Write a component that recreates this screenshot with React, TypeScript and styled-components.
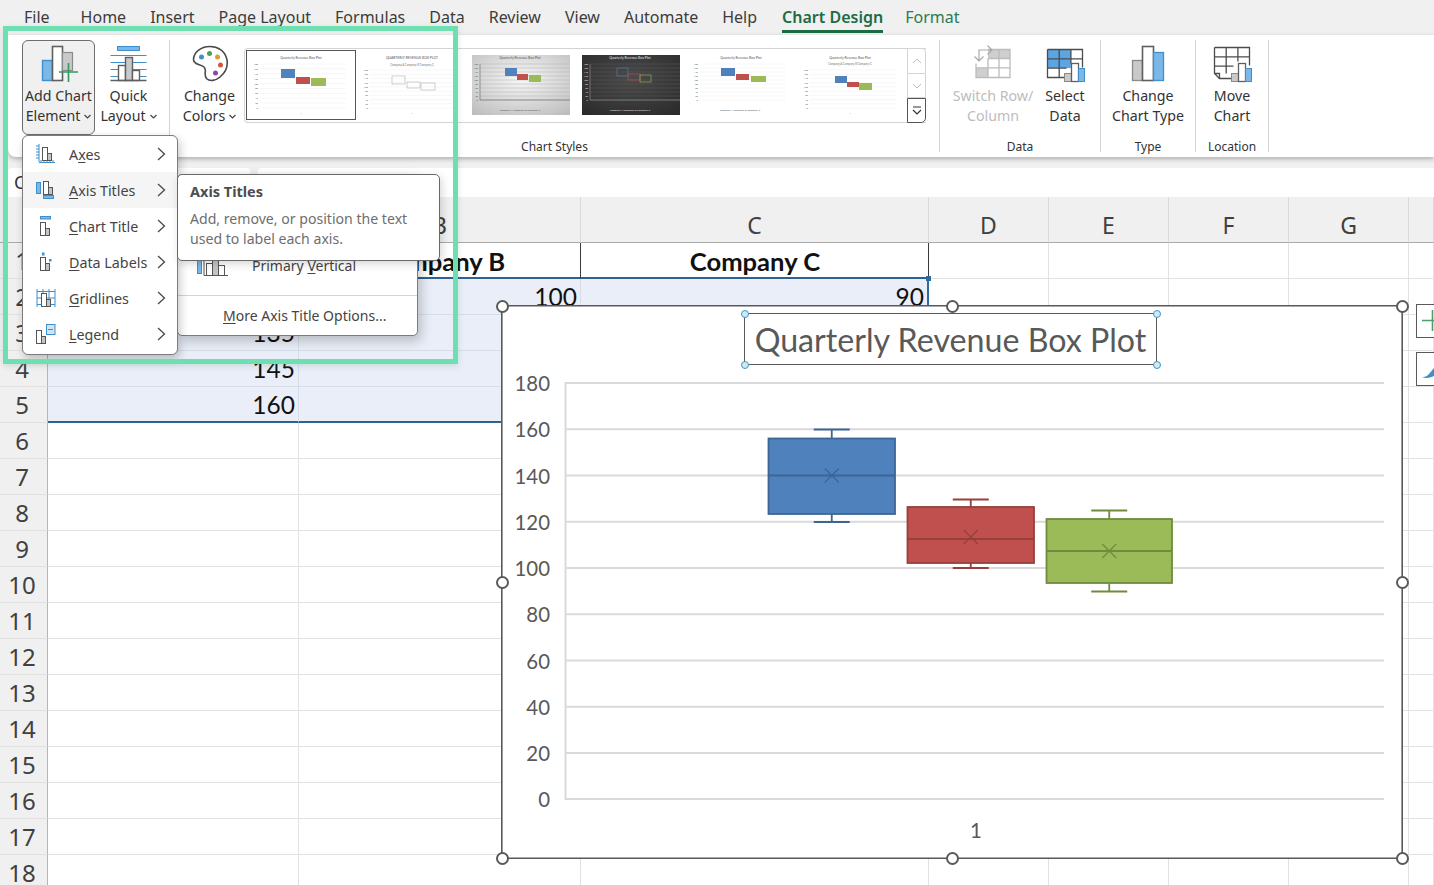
import React from 'react';
import styled, { createGlobalStyle } from 'styled-components';

const Global = createGlobalStyle`
  html, body { margin: 0; padding: 0; background: #f0f0f0; overflow: hidden; }
  * { box-sizing: border-box; }
  u { text-underline-offset: 2px; text-decoration-thickness: 1px; }
`;

const UI = `"Noto Sans", "Open Sans", Arial, sans-serif`;
const CELL = `Lato, "Open Sans", Arial, sans-serif`;

const Root = styled.div`
  position: relative; width: 1434px; height: 885px; overflow: hidden;
  background: #f0f0f0; font-family: ${UI}; color: #333; display: flex; flex-direction: column;
`;

/* ---------- tabs ---------- */
const TabBar = styled.nav`
  height: 35px; flex: none; display: flex; align-items: flex-start; gap: 24px; padding-left: 24px;
`;
const Tab = styled.div<{ $active?: boolean; $context?: boolean; $wide?: boolean }>`
  height: 33px; line-height: 34px; font-size: 16px; white-space: nowrap;
  color: ${p => (p.$active ? '#1c6b45' : p.$context ? '#2b7a52' : '#3c3c3c')};
  font-weight: ${p => (p.$active ? 600 : 400)};
  border-bottom: 3px solid ${p => (p.$active ? '#1c6b45' : 'transparent')};
  margin-right: ${p => (p.$wide ? '7px' : 0)};
  margin-left: ${p => (p.$active ? '1px' : p.$context ? '-2px' : 0)};
`;

/* ---------- ribbon ---------- */
const Ribbon = styled.section`
  height: 122px; flex: none; margin-left: 8px; padding: 5px 0 0 14px; display: flex;
  background: #fff; border-bottom-left-radius: 8px;
  box-shadow: 0 2px 5px rgba(0,0,0,.28);
  position: relative; z-index: 1;
`;
const Group = styled.div<{ $w: number }>`
  width: ${p => p.$w}px; height: 112px; flex: none; display: flex; flex-direction: column;
  border-right: 1px solid #d4d4d4;
`;
const GroupBody = styled.div<{ $pad?: number; $gap?: number }>`
  display: flex; align-items: flex-start; padding-left: ${p => p.$pad ?? 0}px; gap: ${p => p.$gap ?? 0}px;
`;
const GroupLabel = styled.div`
  margin-top: auto; height: 14px; line-height: 18px; text-align: center; font-size: 12px; color: #333; white-space: nowrap;
`;
const RibbonButton = styled.div<{ $w: number; $on?: boolean; $off?: boolean }>`
  width: ${p => p.$w}px; height: 95px; flex: none; display: flex; flex-direction: column; align-items: center;
  padding-top: 3px; border-radius: 6px; font-size: 14.2px; line-height: 20px; text-align: center; white-space: nowrap;
  color: ${p => (p.$off ? '#bdbdbd' : '#333')};
  background: ${p => (p.$on ? '#f0f0f0' : 'transparent')};
  border: 1px solid ${p => (p.$on ? '#6e6e6e' : 'transparent')};
  svg.main { display: block; margin-bottom: 2px; flex: none; }
`;
const Caret = styled.svg`
  width: 7px; height: 5px; margin-left: 4px; vertical-align: 2px; fill: none; stroke: #444; stroke-width: 1.2;
`;

/* ---------- gallery ---------- */
const Gallery = styled.div`
  margin-left: 3px; margin-top: 8px; width: 682px; height: 75px; flex: none; display: flex;
  border: 1px solid #d4d4d4; border-right: 0; border-radius: 4px 0 0 4px; padding: 1px 0 0 1px;
  background: #fff;
`;
const Slot = styled.div<{ $sel?: boolean }>`
  width: 110px; height: 70px; flex: none;
  outline: ${p => (p.$sel ? '1px solid #555' : 'none')}; outline-offset: -1px;
  svg { display: block; }
`;
const GalleryScroll = styled.div`
  margin-left: auto; width: 19px; display: flex; flex-direction: column; margin-top: -2px; margin-bottom: -1px;
`;
const ScrollBtn = styled.div<{ $more?: boolean; $h: number }>`
  height: ${p => p.$h}px; display: flex; align-items: center; justify-content: center;
  border: 1px solid ${p => (p.$more ? '#555' : '#d4d4d4')};
  border-top-width: ${p => (p.$h === 26 ? 1 : 0)}px;
  border-top-color: #d4d4d4;
  border-radius: ${p => (p.$more ? '0 0 5px 0' : p.$h === 26 ? '0 4px 0 0' : 0)};
  background: #fff;
  ${p => p.$more && 'border-top-width: 1px; border-top-color: #555;'}
`;

/* ---------- formula bar ---------- */
const FormulaRow = styled.div`
  height: 29px; flex: none; margin-top: 11px; padding-left: 8px; display: flex; gap: 8px;
`;
const NameBox = styled.div`
  width: 242px; background: #fff; border-radius: 4px 4px 0 0; font-size: 18px; line-height: 29px; padding-left: 6px; color: #333; white-space: nowrap;
`;
const FormulaBox = styled.div`
  flex: 1; background: #fff; border-radius: 4px 0 0 0;
`;

/* ---------- sheet ---------- */
const Sheet = styled.div`
  display: grid; grid-template-columns: 48px 251px 282px 348px 120px 120px 120px 120px 25px;
  grid-auto-rows: 36px; grid-template-rows: 46px; background: #fff; font-family: ${CELL};
`;
const ColHead = styled.div`
  background: #f0f0f0; border-bottom: 1px solid #a9a9a9; border-right: 1px solid #dadada;
  display: flex; align-items: center; justify-content: center; padding-top: 10px; font-family: ${UI}; font-size: 23px; color: #404040;
`;
const Corner = styled(ColHead)`border-right: 1px solid #b5b5b5;`;
const RowHead = styled.div`
  background: #f0f0f0; border-right: 1px solid #b5b5b5; border-bottom: 1px solid #e2e2e2;
  text-align: center; font-family: ${UI}; font-size: 24px; line-height: 36px; color: #404040; padding-right: 3px;
`;
const Cell = styled.div<{ $sel?: boolean; $bold?: boolean; $dark?: boolean; $edgeR?: boolean; $edgeB?: boolean }>`
  background: ${p => (p.$sel ? '#e9eef8' : '#fff')};
  border-right: ${p => (p.$edgeR ? '2px solid #2f6a9e' : p.$dark ? '1px solid #3a3a3a' : `1px solid ${p.$sel ? '#d7dde6' : '#e2e2e2'}`)};
  border-bottom: ${p => (p.$edgeB ? '2px solid #2f6090' : p.$dark ? '2px solid #2f6090' : `1px solid ${p.$sel ? '#d7dde6' : '#e2e2e2'}`)};
  font-size: ${p => (p.$bold ? 25.6 : 24.5)}px; line-height: ${p => (p.$bold ? 36 : 35)}px; padding: 0 3px 0 4px; overflow: hidden; white-space: nowrap; color: #111;
  text-align: ${p => (p.$bold ? 'center' : 'right')};
  font-weight: ${p => (p.$bold ? 700 : 400)};
`;
const FillHandle = styled.div`
  position: absolute; left: 926px; top: 276px; width: 5px; height: 5px; background: #2f6a9e;
`;

/* ---------- floating chart ---------- */
const ChartFrame = styled.div`
  position: absolute; left: 501px; top: 305px; width: 902px; height: 554px; background: #fff;
  border: 1px solid #595959; box-shadow: inset 0 0 0 .6px #595959; z-index: 2;
  svg.plot { position: absolute; left: -1px; top: -1px; }
`;
const Handle = styled.div<{ $x: number; $y: number }>`
  position: absolute; left: ${p => p.$x}%; top: ${p => p.$y}%; width: 13px; height: 13px;
  margin: -6.5px 0 0 -6.5px; border-radius: 50%; background: #fff; border: 2px solid #595959;
`;
const TitleBox = styled.div`
  position: absolute; left: 242px; top: 7px; width: 413px; height: 52px; border: 1px solid #595959;
  font-family: ${CELL}; font-size: 32.2px; line-height: 52px; text-align: center; color: #595959; white-space: nowrap;
`;
const TinyHandle = styled.div<{ $r?: boolean; $b?: boolean }>`
  position: absolute; width: 8px; height: 8px; border-radius: 50%; background: #cfe8f5; border: 1.5px solid #3d9ac9;
  ${p => (p.$r ? 'right: -4.5px;' : 'left: -4.5px;')}
  ${p => (p.$b ? 'bottom: -4.5px;' : 'top: -4.5px;')}
`;
const SideButton = styled.div<{ $top: number }>`
  position: absolute; left: 1416px; top: ${p => p.$top}px; width: 40px; height: 34px; background: #fff;
  border: 1px solid #595959; z-index: 2; padding: 5px 0 0 5px;
  svg { display: block; }
`;

/* ---------- menus ---------- */
const Menu = styled.div`
  position: absolute; left: 22px; top: 135px; width: 156px; height: 220px; background: #fff; z-index: 6;
  border: 1px solid #7c7c7c; border-radius: 6px; box-shadow: 2px 4px 10px rgba(0,0,0,.22); overflow: hidden;
`;
const MenuRow = styled.div<{ $hover?: boolean }>`
  height: 36px; display: flex; align-items: center; padding: 0 11px 0 13px; font-size: 14.3px; color: #444; white-space: nowrap;
  background: ${p => (p.$hover ? '#f5f5f5' : 'transparent')};
  svg.ico { flex: none; margin-right: 13px; }
  svg.chev { flex: none; margin-left: auto; }
`;
const SubMenu = styled.div`
  position: absolute; left: 177px; top: 174px; width: 241px; height: 162px; background: #fff; z-index: 5;
  border: 1px solid #7c7c7c; border-radius: 5px; box-shadow: 3px 5px 12px rgba(0,0,0,.22);
  padding-top: 71px; font-size: 14px; color: #444;
`;
const SubRow = styled.div`
  height: 38px; display: flex; align-items: center; padding-left: 19px; white-space: nowrap;
  svg { margin-right: 23px; flex: none; }
`;
const SubDivider = styled.div`
  margin: 11px 0 1px; height: 1px; background: #d4d4d4;
`;
const SubLink = styled.div`
  height: 38px; line-height: 38px; padding-left: 45px; white-space: nowrap;
`;
const Tip = styled.div`
  position: absolute; left: 177px; top: 174px; width: 263px; height: 87px; background: #fff; z-index: 7;
  border: 1px solid #686868; border-radius: 5px; padding: 6px 12px; box-shadow: 2px 3px 8px rgba(0,0,0,.16);
`;
const TipTitle = styled.div`
  font-size: 14.5px; font-weight: 700; color: #4d4d4d; line-height: 21px; margin-bottom: 7px;
`;
const TipText = styled.div`
  font-size: 14.1px; line-height: 20px; color: #6e6e6e; white-space: nowrap;
`;
const Callout = styled.div`
  position: absolute; left: 3px; top: 26px; width: 455px; height: 338px; z-index: 8; pointer-events: none;
  border: 5px solid #6edfb1; box-shadow: 0 2px 6px rgba(60,120,90,.18);
`;

/* ---------- drawings ---------- */
const D = '#5f5f5f', B = '#3f8fcb', BF = '#7ab8ea', G = '#c9c9c9';

const Main = (p: React.SVGProps<SVGSVGElement>) => <svg className="main" width={40} height={40} viewBox="0 0 40 40" fill="none" {...p} />;

const AddChartIcon = () => (
  <Main>
    <rect x="3.5" y="16.5" width="10" height="20" fill={BF} stroke={B} strokeWidth="1.4" />
    <rect x="13.5" y="2.5" width="10" height="34" fill="#fff" stroke={D} strokeWidth="1.6" />
    <rect x="23.5" y="8.5" width="10" height="18" fill={G} stroke="#8a8a8a" strokeWidth="1.2" />
    <path d="M29.5 19v19M20 28h19" stroke="#2f9a5f" strokeWidth="1.6" />
  </Main>
);
const QuickLayoutIcon = () => (
  <Main>
    <rect x="8.5" y="2.5" width="22" height="4" fill={BF} stroke={B} />
    <path d="M1.5 11.5h36M1.5 18.5h36M1.5 25.5h36M1.5 32.5h36" stroke={B} strokeWidth="1.2" />
    <rect x="9.5" y="21.5" width="7" height="15" fill="#fff" stroke={D} strokeWidth="1.4" />
    <rect x="16.5" y="13.5" width="7" height="23" fill={G} stroke={D} strokeWidth="1.4" />
    <rect x="23.5" y="26.5" width="7" height="10" fill="#fff" stroke={D} strokeWidth="1.4" />
    <path d="M1.5 36.5h36" stroke={D} strokeWidth="1.4" />
  </Main>
);
const PaletteIcon = () => (
  <Main>
    <path d="M20 2.500C10 2.500 3.500 9 3.500 15.500c0 5.500 7 4.500 10.500 7.500 3.500 3.500-1 7 2.500 11.500 3 3 9 2.500 13.500-1.500 6-5 8.500-12 6.500-19C34.500 7 28 2.500 20 2.500z" fill="#fff" stroke="#4a4a4a" strokeWidth="1.6" />
    <circle cx="11.500" cy="13" r="2.500" fill="#3f8fcb" />
    <circle cx="19.500" cy="9.500" r="2.500" fill="#4e9e5b" />
    <circle cx="27.500" cy="13" r="2.500" fill="#e39a36" />
    <circle cx="30.500" cy="21" r="2.500" fill="#d4553f" />
    <circle cx="25.500" cy="29" r="2.500" fill="#8b4aa8" />
  </Main>
);
const ChartTypeIcon = () => (
  <Main>
    <rect x="4.500" y="16.500" width="10" height="20" fill={G} stroke="#8a8a8a" strokeWidth="1.3" />
    <rect x="14.500" y="2.500" width="11" height="34" fill="#fff" stroke={D} strokeWidth="1.6" />
    <rect x="25.500" y="8.500" width="10" height="28" fill={BF} stroke={B} strokeWidth="1.3" />
  </Main>
);
const MiniBars = ({ x }: { x: number }) => (
  <g>
    <rect x={x} y="29.500" width="7" height="8" fill={G} stroke="#8a8a8a" />
    <rect x={x + 7} y="19.500" width="7" height="18" fill="#fff" stroke={D} strokeWidth="1.3" />
    <rect x={x + 14} y="24.500" width="6" height="13" fill={BF} stroke={B} />
  </g>
);
const SelectDataIcon = () => (
  <Main>
    <rect x="2.500" y="5.500" width="23.400" height="18.600" fill="#5aa5e4" />
    <path d="M2.500 5.500h35v18M2.500 5.500v28h17M14.200 5.500v28M25.900 5.500v14M2.500 14.800h35M2.500 24.100h19" stroke="#4c4c4c" strokeWidth="1.300" />
    <MiniBars x={19.500} />
  </Main>
);
const SwitchIcon = () => (
  <Main>
    <rect x="3" y="24" width="12" height="9" fill="#cfcfcf" />
    <rect x="15" y="5" width="22" height="9" fill="#cfcfcf" />
    <path d="M15 5.500h22v28H3v-14M15 14.500h22M3 23.800h34M15 14.500v19M26 5.500v28" stroke="#bcbcbc" strokeWidth="1.300" />
    <path d="M6 17V6h13M14.500 1.500 19 6l-4.500 4.500M1.500 12.500 6 17l4.500-4.500" stroke="#a9a9a9" strokeWidth="1.200" />
  </Main>
);
const MoveChartIcon = () => (
  <Main>
    <path d="M2.500 3.500h35v18M2.500 3.500v26l5 5h12M2.500 29.500h5v5M14.200 3.500v26M25.900 3.500v14M2.500 12.800h35M2.500 22.100h19" stroke="#4c4c4c" strokeWidth="1.300" />
    <MiniBars x={19.500} />
  </Main>
);
const DownCaret = () => <Caret viewBox="0 0 7 5"><path d="M.5 1l3 3 3-3" /></Caret>;
const Chevron = () => (
  <svg className="chev" width="9" height="14" viewBox="0 0 9 14" fill="none"><path d="M1 1l6.500 6L1 13" stroke="#4a4a4a" strokeWidth="1.300" /></svg>
);
const Ico = (p: React.SVGProps<SVGSVGElement>) => <svg className="ico" width={20} height={20} viewBox="0 0 20 20" fill="none" {...p} />;
const SmallBars = ({ x = 6, y = 3 }: { x?: number; y?: number }) => (
  <g stroke="#555" strokeWidth="1" fill="#fff">
    <rect x={x + .5} y={y + .5} width="5" height="13" />
    <rect x={x + 5.500} y={y + 6.500} width="4" height="7" fill="#c4c4c4" />
  </g>
);
const AxesIco = () => (
  <Ico>
    <path d="M3 0v18M0 2h3M0 5h3M0 8h3M0 11h3M0 14h3M3 18.500h16M5 16v3M8 16v3M11 16v3M14 16v3M17 16v3" stroke={B} strokeWidth="1" />
    <SmallBars />
  </Ico>
);
const TitlesIco = () => (
  <Ico>
    <rect x=".5" y="2.500" width="4" height="11" fill={BF} stroke={B} />
    <rect x="7.500" y="15.500" width="10" height="3" fill={BF} stroke={B} />
    <SmallBars x={7} y={1} />
  </Ico>
);
const ChartTitleIco = () => (
  <Ico>
    <rect x="4.500" y="0.500" width="10" height="2.500" fill={BF} stroke={B} />
    <SmallBars x={4} y={6} />
  </Ico>
);
const LabelsIco = () => (
  <Ico>
    <rect x="6" y="0.500" width="2.500" height="3" fill={B} />
    <rect x="13" y="7" width="2.500" height="2.500" fill={B} />
    <SmallBars x={4} y={5} />
  </Ico>
);
const GridIco = () => (
  <Ico>
    <path d="M1 3.500h18M1 10h18M1 16.500h18M1 1v18M7 1v18M13 1v18M19 1v18" stroke={B} strokeWidth="1" />
    <SmallBars x={5} y={5} />
  </Ico>
);
const LegendIco = () => (
  <Ico>
    <rect x="10.500" y="0.500" width="8.500" height="10" fill="#cfe4f6" stroke={B} />
    <path d="M12 5.500h5" stroke={B} />
    <SmallBars x={0} y={6} />
  </Ico>
);
const VerticalIco = () => (
  <svg width="32" height="24" viewBox="0 0 32 24" fill="none">
    <rect x=".5" y="1.500" width="4" height="19" fill={BF} stroke={B} />
    <path d="M7 0v22.500h24" stroke="#555" />
    <rect x="9.500" y="10.500" width="6" height="12" fill="#fff" stroke="#555" />
    <rect x="15.500" y="5.500" width="6" height="17" fill="#c4c4c4" stroke="#555" />
    <rect x="21.500" y="12.500" width="6" height="10" fill="#fff" stroke="#555" />
  </svg>
);

type Box = [number, number, number, number];
interface ThumbSpec {
  sel?: boolean; title: string; tx: number; ty: number; sub?: number; legend?: boolean; outline?: boolean;
  bg?: 'gray' | 'dark'; boxes: Box[]; faint?: boolean;
}
const THUMBS: ThumbSpec[] = [
  { sel: true, title: 'Quarterly Revenue Box Plot', tx: 55, ty: 9, boxes: [[35, 19, 14, 9], [50, 27, 14, 7], [65, 28, 15, 8]] },
  { title: 'QUARTERLY REVENUE BOX PLOT', tx: 56, ty: 9, sub: 16, outline: true, faint: true, boxes: [[36, 26, 13, 8], [51, 32, 13, 6], [65, 33, 14, 7]] },
  { title: 'Quarterly Revenue Box Plot', tx: 54, ty: 9, legend: true, bg: 'gray', boxes: [[39, 18, 12, 8], [51, 24, 11, 6], [63, 25, 12, 7]] },
  { title: 'Quarterly Revenue Box Plot', tx: 54, ty: 9, legend: true, bg: 'dark', outline: true, boxes: [[41, 18, 11, 8], [52, 24, 12, 6], [64, 25, 11, 7]] },
  { title: 'Quarterly Revenue Box Plot', tx: 55, ty: 9, legend: true, boxes: [[35, 18, 14, 8], [50, 24, 13, 6], [65, 26, 15, 6]] },
  { title: 'Quarterly Revenue Box Plot', tx: 54, ty: 9, sub: 15, boxes: [[39, 26, 12, 7], [51, 32, 12, 5], [63, 33, 13, 7]] },
];
const BOXCOL = ['#4f81bd', '#c0504d', '#9bbb59'];

const Thumb = ({ s, idx }: { s: ThumbSpec; idx: number }) => {
  const dark = s.bg === 'dark';
  const ink = dark ? '#e8e8e8' : '#555';
  const inset = s.bg || s.legend ? { x: 6, y: 5, w: 98, h: 60 } : { x: 1, y: 1, w: 108, h: 68 };
  return (
    <svg width="110" height="70" viewBox="0 0 110 70" fontFamily={CELL}>
      <defs>
        <radialGradient id={`g${idx}`} cx="50%" cy="40%" r="75%">
          <stop offset="0" stopColor={dark ? '#4a4a4a' : '#f8f8f8'} />
          <stop offset="1" stopColor={dark ? '#2b2b2b' : '#bdbdbd'} />
        </radialGradient>
      </defs>
      {s.bg && <rect x={inset.x} y={inset.y} width={inset.w} height={inset.h} fill={`url(#g${idx})`} />}
      <text x={s.tx} y={s.ty} fontSize="3.400" fill={ink} textAnchor="middle">{s.title}</text>
      {s.sub && <text x={s.tx} y={s.sub} fontSize="2.800" fill="#777" textAnchor="middle">Company A  Company B  Company C</text>}
      {Array.from({ length: 10 }, (_, i) => {
        const top = s.sub ? 20 : 14;
        const bottom = s.legend ? 50 : 58;
        const y = top + ((bottom - top) * i) / 9;
        return (
          <g key={i}>
            <text x={12} y={y + 1} fontSize="2.400" fill={ink} textAnchor="end">{180 - i * 20}</text>
            <line x1={14} x2={s.bg ? 104 : 100} y1={y} y2={y} stroke={dark ? '#5a5a5a' : s.bg ? '#b0b0b0' : '#ededed'} strokeWidth=".5" />
          </g>
        );
      })}
      {s.bg && <path d="M14 14V50H104" stroke={dark ? '#999' : '#666'} strokeWidth=".6" fill="none" />}
      {s.boxes.map((b, i) => (
        <rect key={i} x={b[0]} y={b[1]} width={b[2]} height={b[3]} fill={s.outline ? 'none' : BOXCOL[i]}
          stroke={s.outline ? (s.faint ? '#b5b0a8' : BOXCOL[i]) : 'none'} strokeWidth=".6" />
      ))}
      {s.legend && <text x="54" y="60.500" fontSize="2.600" fill={ink} textAnchor="middle">Company A Company B Company C</text>}
      {!s.legend && <text x={s.tx} y="64" fontSize="2.600" fill="#666" textAnchor="middle">1</text>}
    </svg>
  );
};

const AXIS: [string, number][] = [['180', 383], ['160', 429.300], ['140', 475.500], ['120', 521.800], ['100', 568], ['80', 614.200], ['60', 660.500], ['40', 706.700], ['20', 753], ['0', 799]];

interface BoxPlot { x: number; w: number; top: number; bottom: number; med: number; wTop: number; wBot: number; mean: number; fill: string; line: string; }
const PLOTS: BoxPlot[] = [
  { x: 768.500, w: 126.500, top: 438.500, bottom: 514, med: 475.500, wTop: 429.500, wBot: 522, mean: 475.500, fill: '#4f81bd', line: '#3c6595' },
  { x: 907.500, w: 126.500, top: 507, bottom: 563, med: 539, wTop: 499.500, wBot: 568, mean: 537, fill: '#c0504d', line: '#963f3c' },
  { x: 1046.500, w: 125.500, top: 519, bottom: 583, med: 551, wTop: 510.500, wBot: 591.500, mean: 551, fill: '#9bbb59', line: '#708a3f' },
];

const Plot = () => (
  <svg className="plot" width="902" height="554" viewBox="501 305 902 554" fontFamily={CELL}>
    {AXIS.map(([t, y]) => (
      <g key={t}>
        <line x1="565" x2="1384" y1={y} y2={y} stroke="#d9d9d9" strokeWidth="2" />
        <text x="550" y={y + 8} fontSize="20.400" fill="#595959" textAnchor="end">{t}</text>
      </g>
    ))}
    <line x1="565.500" x2="565.500" y1="382" y2="800" stroke="#d9d9d9" strokeWidth="2" />
    {PLOTS.map(b => {
      const c = b.x + b.w / 2;
      return (
        <g key={b.x} stroke={b.line} strokeWidth="1.800">
          <path d={`M${c - 18} ${b.wTop}H${c + 18}M${c} ${b.wTop}V${b.top}M${c} ${b.bottom}V${b.wBot}M${c - 18} ${b.wBot}H${c + 18}`} fill="none" />
          <rect x={b.x} y={b.top} width={b.w} height={b.bottom - b.top} fill={b.fill} />
          <path d={`M${b.x} ${b.med}H${b.x + b.w}`} />
          <path d={`M${c - 7} ${b.mean - 7}l14 14M${c + 7} ${b.mean - 7}l-14 14`} fill="none" strokeWidth="1.200" />
        </g>
      );
    })}
    <text x="976" y="838" fontSize="20.400" fill="#595959" textAnchor="middle">1</text>
  </svg>
);

const COLS = ['A', 'B', 'C', 'D', 'E', 'F', 'G', ''];
const DATA: string[][] = [
  ['Company A', 'Company B', 'Company C'],
  ['120', '100', '90'],
  ['135', '110', '105'],
  ['145', '120', '110'],
  ['160', '130', '125'],
];

const TABS = ['File', 'Home', 'Insert', 'Page Layout', 'Formulas', 'Data', 'Review', 'View', 'Automate', 'Help'];

export default function App() {
  return (
    <Root>
      <Global />
      <TabBar>
        {TABS.map((t, i) => <Tab key={t} $wide={i === 0}>{t}</Tab>)}
        <Tab $active>Chart Design</Tab>
        <Tab $context>Format</Tab>
      </TabBar>

      <Ribbon>
        <Group $w={148}>
          <GroupBody $gap={2}>
            <RibbonButton $w={73} $on>
              <AddChartIcon />
              <span>Add Chart</span>
              <span>Element<DownCaret /></span>
            </RibbonButton>
            <RibbonButton $w={63}>
              <QuickLayoutIcon />
              <span>Quick</span>
              <span>Layout<DownCaret /></span>
            </RibbonButton>
          </GroupBody>
        </Group>
        <Group $w={770}>
          <GroupBody $pad={8}>
            <RibbonButton $w={63}>
              <PaletteIcon />
              <span>Change</span>
              <span>Colors<DownCaret /></span>
            </RibbonButton>
            <Gallery>
              {THUMBS.map((s, i) => <Slot key={i} $sel={s.sel}><Thumb s={s} idx={i} /></Slot>)}
              <GalleryScroll>
                <ScrollBtn $h={26}><svg width="10" height="6" viewBox="0 0 10 6" fill="none"><path d="M1 5l4-4 4 4" stroke="#bdbdbd" /></svg></ScrollBtn>
                <ScrollBtn $h={24}><svg width="10" height="6" viewBox="0 0 10 6" fill="none"><path d="M1 1l4 4 4-4" stroke="#bdbdbd" /></svg></ScrollBtn>
                <ScrollBtn $h={25} $more><svg width="10" height="10" viewBox="0 0 10 10" fill="none"><path d="M1 1h8M1 4l4 4 4-4" stroke="#333" strokeWidth="1.200" /></svg></ScrollBtn>
              </GalleryScroll>
            </Gallery>
          </GroupBody>
          <GroupLabel>Chart Styles</GroupLabel>
        </Group>
        <Group $w={161}>
          <GroupBody $pad={10} $gap={4}>
            <RibbonButton $w={86} $off>
              <SwitchIcon />
              <span>Switch Row/</span>
              <span>Column</span>
            </RibbonButton>
            <RibbonButton $w={50}>
              <SelectDataIcon />
              <span>Select</span>
              <span>Data</span>
            </RibbonButton>
          </GroupBody>
          <GroupLabel>Data</GroupLabel>
        </Group>
        <Group $w={95}>
          <GroupBody>
            <RibbonButton $w={94}>
              <ChartTypeIcon />
              <span>Change</span>
              <span>Chart Type</span>
            </RibbonButton>
          </GroupBody>
          <GroupLabel>Type</GroupLabel>
        </Group>
        <Group $w={73}>
          <GroupBody>
            <RibbonButton $w={72}>
              <MoveChartIcon />
              <span>Move</span>
              <span>Chart</span>
            </RibbonButton>
          </GroupBody>
          <GroupLabel>Location</GroupLabel>
        </Group>
      </Ribbon>

      <FormulaRow>
        <NameBox>Chart 1</NameBox>
        <FormulaBox />
      </FormulaRow>

      <Sheet>
        <Corner />
        {COLS.map((c, i) => <ColHead key={i}>{c}</ColHead>)}
        {Array.from({ length: 18 }, (_, r) => (
          <React.Fragment key={r}>
            <RowHead>{r + 1}</RowHead>
            {COLS.map((_, c) => {
              const inTable = r < 5 && c < 3;
              const txt = inTable ? DATA[r][c] : '';
              return (
                <Cell
                  key={c}
                  $sel={inTable && r > 0}
                  $bold={r === 0 && c < 3}
                  $dark={r === 0 && c < 3}
                  $edgeR={inTable && r > 0 && c === 2}
                  $edgeB={r === 4 && c < 3}
                >{txt}</Cell>
              );
            })}
          </React.Fragment>
        ))}
      </Sheet>
      <FillHandle />

      <ChartFrame>
        <Plot />
        <TitleBox>
          Quarterly Revenue Box Plot
          <TinyHandle /><TinyHandle $r /><TinyHandle $b /><TinyHandle $r $b />
        </TitleBox>
        <Handle $x={0} $y={0} /><Handle $x={50} $y={0} /><Handle $x={100} $y={0} />
        <Handle $x={0} $y={50} /><Handle $x={100} $y={50} />
        <Handle $x={0} $y={100} /><Handle $x={50} $y={100} /><Handle $x={100} $y={100} />
      </ChartFrame>
      <SideButton $top={304}>
        <svg width="20" height="22" viewBox="0 0 20 22" fill="none"><path d="M0 10.500h20M10.500 0v21" stroke="#4aa06c" strokeWidth="1.600" /></svg>
      </SideButton>
      <SideButton $top={352}>
        <svg width="14" height="22" viewBox="0 0 14 22"><path d="M0 19c3 .5 5-1 7-3l5-6 1 7c-3 3-9 4-13 2z" fill="#3f8fcb" /></svg>
      </SideButton>

      <Menu>
        <MenuRow><AxesIco /><span>A<u>x</u>es</span><Chevron /></MenuRow>
        <MenuRow $hover><TitlesIco /><span><u>A</u>xis Titles</span><Chevron /></MenuRow>
        <MenuRow><ChartTitleIco /><span><u>C</u>hart Title</span><Chevron /></MenuRow>
        <MenuRow><LabelsIco /><span><u>D</u>ata Labels</span><Chevron /></MenuRow>
        <MenuRow><GridIco /><span><u>G</u>ridlines</span><Chevron /></MenuRow>
        <MenuRow><LegendIco /><span><u>L</u>egend</span><Chevron /></MenuRow>
      </Menu>
      <SubMenu>
        <SubRow><VerticalIco /><span>Primary <u>V</u>ertical</span></SubRow>
        <SubDivider />
        <SubLink><u>M</u>ore Axis Title Options...</SubLink>
      </SubMenu>
      <Tip>
        <TipTitle>Axis Titles</TipTitle>
        <TipText>Add, remove, or position the text</TipText>
        <TipText>used to label each axis.</TipText>
      </Tip>
      <Callout />
    </Root>
  );
}
